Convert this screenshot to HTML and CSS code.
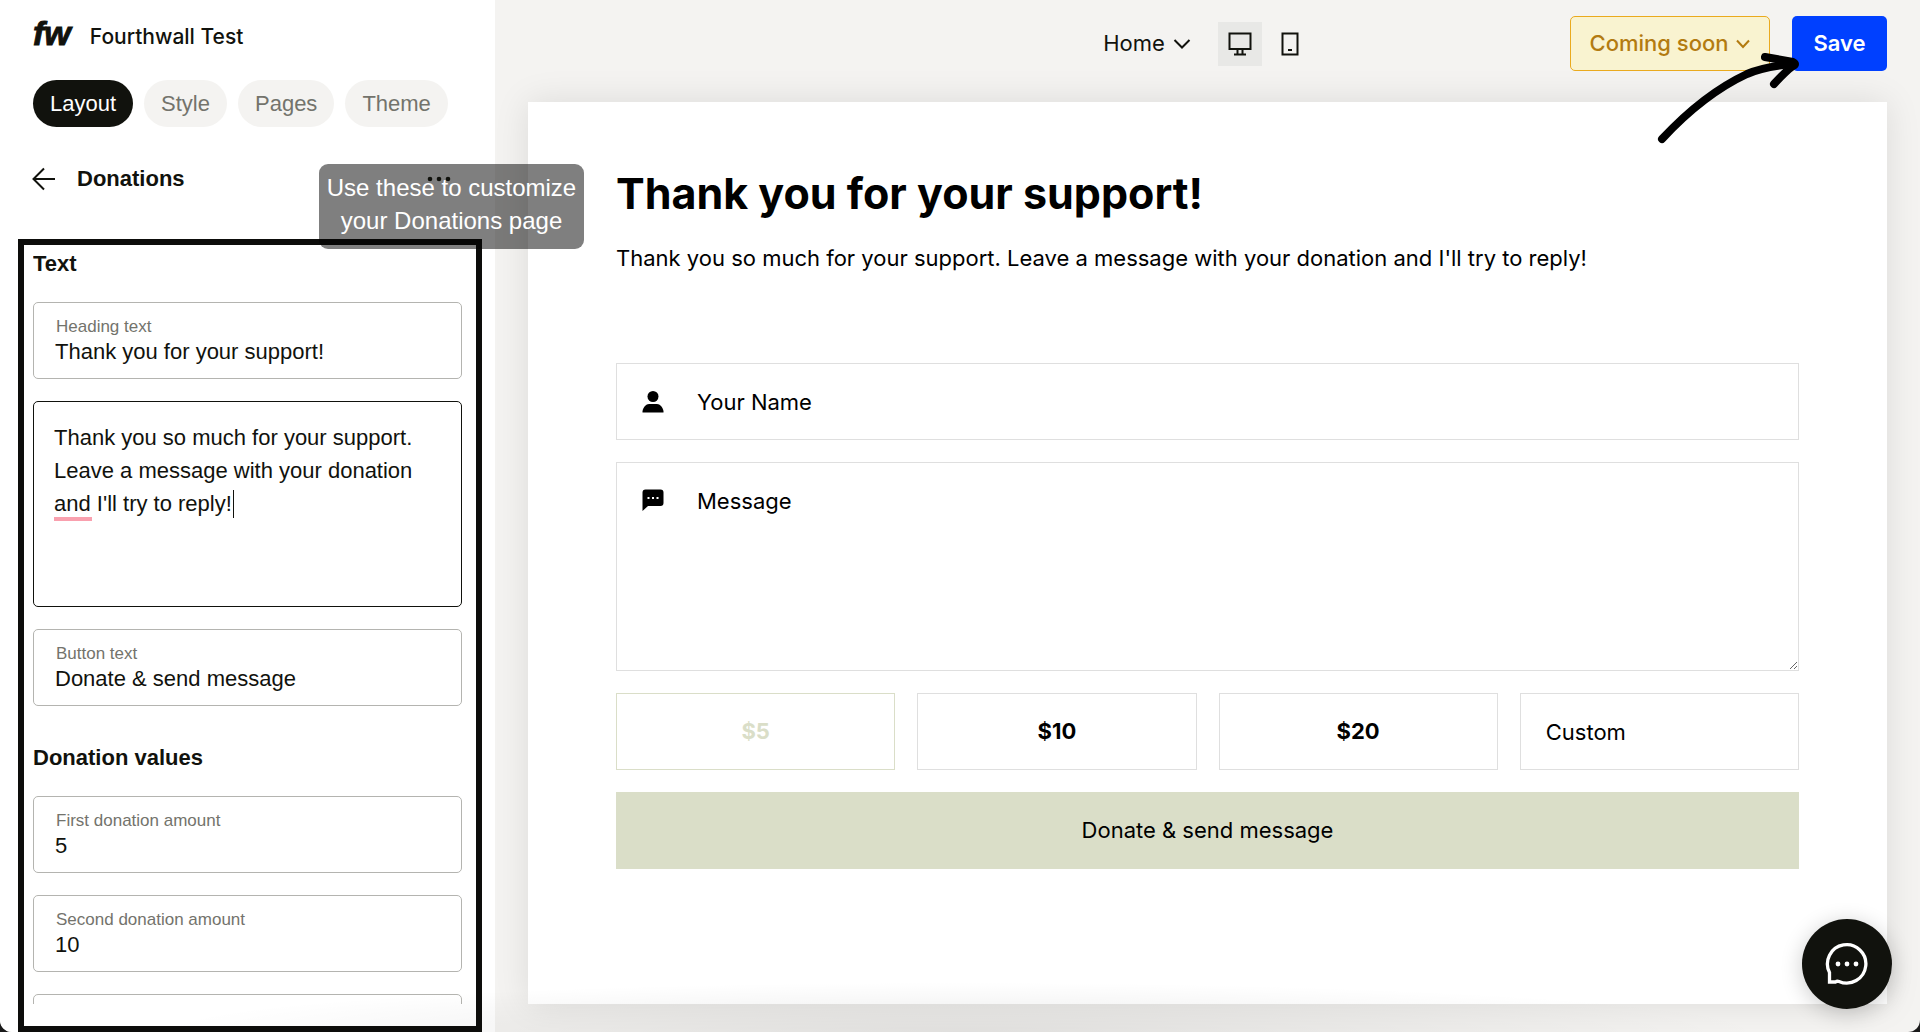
FILE: index.html
```html
<!DOCTYPE html>
<html lang="en">
<head>
<meta charset="utf-8">
<meta name="viewport" content="width=device-width, initial-scale=1">
<title>Fourthwall Test – Donations</title>
<link rel="stylesheet" href="styles.css">
</head>
<body>
<div class="app">
  <aside class="sidebar">
    <header class="brand">
      <span class="brand-logo">fw</span>
      <span class="brand-name">Fourthwall Test</span>
    </header>
    <nav class="tabs" aria-label="Editor sections">
      <button type="button" class="tab tab-active">Layout</button>
      <button type="button" class="tab">Style</button>
      <button type="button" class="tab">Pages</button>
      <button type="button" class="tab">Theme</button>
    </nav>
    <div class="crumb">
      <button type="button" class="icon-button" aria-label="Back">
        <svg width="24" height="24" viewBox="0 0 24 24" fill="none" stroke="currentColor" stroke-width="2"><path d="M23 12H2M12 1.500L1.500 12L12 22.500"/></svg>
      </button>
      <h1 class="crumb-title">Donations</h1>
      <button type="button" class="icon-button more" aria-label="More options">
        <svg width="24" height="24" viewBox="0 0 24 24" fill="currentColor"><circle cx="3" cy="12" r="2.300"/><circle cx="12" cy="12" r="2.300"/><circle cx="21" cy="12" r="2.300"/></svg>
      </button>
      <div class="tip" role="note">Use these to customize your Donations page</div>
    </div>
    <section class="settings">
      <form class="settings-scroll">
        <h2 class="group-title">Text</h2>
        <div class="field">
          <label for="heading-text">Heading text</label>
          <input id="heading-text" type="text" value="Thank you for your support!">
        </div>
        <div class="area">
          <textarea aria-label="Description" spellcheck="false">Thank you so much for your support. Leave a message with your donation and I'll try to reply!</textarea>
          <span class="spell-mark"></span>
          <span class="caret"></span>
        </div>
        <div class="field">
          <label for="button-text">Button text</label>
          <input id="button-text" type="text" value="Donate &amp; send message">
        </div>
        <h2 class="group-title group-title-next">Donation values</h2>
        <div class="field">
          <label for="first-amount">First donation amount</label>
          <input id="first-amount" type="text" value="5">
        </div>
        <div class="field">
          <label for="second-amount">Second donation amount</label>
          <input id="second-amount" type="text" value="10">
        </div>
        <div class="field">
          <input type="text" aria-label="Third donation amount">
        </div>
      </form>
    </section>
  </aside>

  <main class="workspace">
    <div class="toolbar">
      <div class="view-controls">
        <button type="button" class="page-picker">Home
          <svg width="18" height="12" viewBox="0 0 18 12" fill="none" stroke="currentColor" stroke-width="2"><path d="M1.500 2L9 9.500L16.500 2"/></svg>
        </button>
        <button type="button" class="device device-active" aria-label="Desktop preview">
          <svg width="24" height="24" viewBox="0 0 24 24" fill="none" stroke="currentColor" stroke-width="2"><path d="M1.500 1.500H22.500V17H1.500ZM9.500 17V22M14.500 17V22M6 22.500H18"/></svg>
        </button>
        <button type="button" class="device" aria-label="Mobile preview">
          <svg width="24" height="24" viewBox="0 0 24 24" fill="none" stroke="currentColor" stroke-width="2"><path d="M4.500 1.500H19.500V22.500H4.500ZM10 18H14"/></svg>
        </button>
      </div>
      <div class="actions">
        <button type="button" class="status">Coming soon
          <svg width="14" height="10" viewBox="0 0 14 10" fill="none" stroke="currentColor" stroke-width="2"><path d="M1 1.500L7 8L13 1.500"/></svg>
        </button>
        <button type="button" class="save">Save</button>
        <svg class="pointer" width="146" height="100" viewBox="0 0 146 100" fill="none" stroke="#000" stroke-width="8" stroke-linecap="round" stroke-linejoin="round"><path d="M7 92C34 63 62 41 92 27Q108 20 137 17"/><path d="M110 10L138 15Q142 17 138 19Q132 23 119 37"/></svg>
      </div>
    </div>

    <article class="canvas">
      <h2 class="page-heading">Thank you for your support!</h2>
      <p class="page-text">Thank you so much for your support. Leave a message with your donation and I'll try to reply!</p>
      <form class="donate">
        <label class="box">
          <svg width="22" height="22" viewBox="0 0 22 22"><circle cx="11" cy="5.500" r="5.500"/><path d="M0.500 21.500V20C1.500 16 4 13 7 13H15C18 13 20.500 16 21.500 20V21.500Z"/></svg>
          <input type="text" placeholder="Your Name" aria-label="Your Name">
        </label>
        <label class="box box-message">
          <svg width="22" height="22" viewBox="0 0 22 22"><path d="M3.500 0.500H18.500Q21.500 0.500 21.500 3.500V14Q21.500 17 18.500 17H6L0.500 22V3.500Q0.500 0.500 3.500 0.500Z"/><path fill="#fff" d="M5.500 8h2v2h-2zM10 8h2v2h-2zM14.500 8h2v2h-2z"/></svg>
          <textarea placeholder="Message" aria-label="Message"></textarea>
        </label>
        <div class="amounts">
          <button type="button" class="amount amount-active">$5</button>
          <button type="button" class="amount">$10</button>
          <button type="button" class="amount">$20</button>
          <input type="text" class="amount-custom" placeholder="Custom" aria-label="Custom amount">
        </div>
        <button type="button" class="submit">Donate &amp; send message</button>
      </form>
    </article>
  </main>

  <div class="dock-shade"></div>
  <button type="button" class="chat" aria-label="Open chat">
    <svg width="44" height="44" viewBox="0 0 44 44" fill="none" stroke="#fff" stroke-width="3.300"><path d="M4.500 40V30.500A19.200 19.200 0 1 1 14 39.500Q12 38.800 10.500 40Z"/><g fill="#fff" stroke="none"><circle cx="13" cy="22" r="2.400"/><circle cx="22" cy="22" r="2.400"/><circle cx="31" cy="22" r="2.400"/></g></svg>
  </button>
</div>
</body>
</html>
```

FILE: styles.css
```css
* {
  box-sizing: border-box;
}

body {
  margin: 0;
  background: #1a1a1a;
  color: #11120d;
  font: 22px/33px "Liberation Sans", Arial, sans-serif;
}

button,
input,
textarea {
  font: inherit;
  color: inherit;
  margin: 0;
  padding: 0;
  border: 0;
  background: none;
}

h1,
h2,
p {
  margin: 0;
}

svg {
  display: block;
  flex: none;
}

.app {
  position: relative;
  display: flex;
  height: 100vh;
  overflow: hidden;
  border-radius: 0 0 12px 12px;
  background: #f4f3f1;
}

/* Sidebar */

.sidebar {
  flex: none;
  display: flex;
  flex-direction: column;
  width: 495px;
  background: #fff;
}

.brand {
  display: flex;
  align-items: center;
  gap: 19px;
  padding: 20px 33px 27px;
}

.brand-logo {
  font-size: 34px;
  font-style: italic;
  font-weight: 700;
  line-height: 27px;
  padding-bottom: 6px;
  -webkit-text-stroke: 1px currentColor;
}

.brand-name {
  font-family: "Inter", sans-serif;
  font-size: 21px;
  font-weight: 500;
}

.tabs {
  display: flex;
  gap: 11px;
  padding: 0 33px;
}

.tab {
  height: 47px;
  padding: 0 17px;
  border-radius: 24px;
  background: #f4f3f1;
  color: #73736c;
}

.tab-active {
  background: #11120d;
  color: #fff;
}

.crumb {
  position: relative;
  display: flex;
  align-items: center;
  gap: 21px;
  padding: 35px 44px 44px 32px;
}

.crumb-title,
.group-title {
  font-size: 22px;
  font-weight: 700;
}

.more {
  position: relative;
  z-index: 2;
  margin-left: auto;
}

.tip {
  position: absolute;
  z-index: 1;
  top: 37px;
  left: 319px;
  width: 265px;
  padding: 7px 0 12px;
  border-radius: 9px;
  background: rgba(0, 0, 0, 0.5);
  color: #fff;
  font-size: 24px;
  text-align: center;
}

.settings {
  flex: 1;
  min-height: 0;
  display: flex;
  margin: 0 13px 0 18px;
  padding: 0 14px 22px 9px;
  border: 6px solid #0d0d0b;
}

.settings-scroll {
  flex: 1;
  display: flex;
  flex-direction: column;
  gap: 22px;
  overflow: hidden;
}

.group-title {
  flex: none;
  padding-top: 2px;
}

.group-title-next {
  padding-top: 13px;
}

.field {
  flex: none;
  display: flex;
  flex-direction: column;
  height: 77px;
  padding: 12px 21px;
  border: 1px solid #b4b4b0;
  border-radius: 5px;
}

.field label {
  padding-left: 1px;
  color: #73736c;
  font-size: 17px;
  line-height: 23px;
}

.field input {
  width: 100%;
  height: 26px;
}

.area {
  position: relative;
  flex: none;
}

.area textarea {
  display: block;
  width: 100%;
  height: 206px;
  padding: 19px 20px;
  border: 1px solid #11120d;
  border-radius: 5px;
  resize: none;
}

.spell-mark {
  position: absolute;
  top: 116px;
  left: 21px;
  width: 38px;
  height: 4px;
  background: #f9a0ae;
}

.caret {
  position: absolute;
  top: 89px;
  left: 200px;
  width: 1px;
  height: 28px;
  background: #11120d;
}

/* Workspace */

.workspace {
  flex: 1;
  min-width: 0;
  display: flex;
  flex-direction: column;
  padding: 0 33px 28px;
}

.toolbar {
  display: grid;
  grid-template-columns: 1fr auto 1fr;
  align-items: center;
  padding: 16px 0 31px;
  font-family: "Inter", sans-serif;
}

.view-controls {
  grid-column: 2;
  display: flex;
  align-items: center;
  gap: 6px;
}

.page-picker {
  display: flex;
  align-items: center;
  gap: 8px;
  margin-right: 21px;
}

.device {
  display: grid;
  place-items: center;
  width: 44px;
  height: 44px;
}

.device-active {
  background: #e8e8e6;
}

.actions {
  position: relative;
  display: flex;
  justify-content: flex-end;
  gap: 22px;
}

.status {
  display: flex;
  align-items: center;
  justify-content: center;
  gap: 8px;
  width: 200px;
  height: 55px;
  border: 1px solid #eaaa1e;
  border-radius: 5px;
  background: #f9f3d0;
  color: #b37b10;
  font-weight: 500;
}

.save {
  width: 95px;
  height: 55px;
  border-radius: 5px;
  background: #0040ff;
  color: #fff;
  font-weight: 600;
}

.pointer {
  position: absolute;
  top: 31px;
  right: 86px;
  z-index: 2;
}

.canvas {
  flex: 1;
  padding: 64px 88px;
  background: #fff;
  box-shadow: 0 0 33px rgba(0, 0, 0, 0.1);
  color: #000;
  font-family: "Inter", sans-serif;
}

.page-heading {
  font-size: 43px;
  line-height: 55px;
}

.page-text {
  padding: 21px 0 88px;
}

.donate {
  display: flex;
  flex-direction: column;
  gap: 22px;
}

.box {
  display: flex;
  align-items: center;
  gap: 33px;
  height: 77px;
  padding-left: 25px;
  border: 1px solid #dfdfdf;
}

.box input,
.box textarea {
  flex: 1;
  height: 100%;
  outline: 0;
}

.box-message {
  align-items: flex-start;
  height: 209px;
}

.box-message svg {
  margin-top: 26px;
}

.box-message textarea {
  padding-top: 22px;
  resize: vertical;
}

::placeholder {
  color: #000;
  opacity: 1;
}

.amounts {
  display: grid;
  grid-template-columns: repeat(4, minmax(0, 1fr));
  gap: 22px;
}

.amount,
.amount-custom {
  height: 77px;
  border: 1px solid #dfdfdf;
}

.amount {
  font-weight: 700;
}

.amount-active {
  border-color: #dadec8;
  color: #dadec8;
}

.amount-custom {
  width: 100%;
  padding: 0 25px;
}

.submit {
  height: 77px;
  background: #dadec8;
}

/* Floating items */

.dock-shade {
  position: absolute;
  right: 0;
  bottom: 0;
  left: 0;
  height: 50px;
  background: radial-gradient(ellipse 42% 100% at 50% 100%, rgba(0, 0, 0, 0.08), rgba(0, 0, 0, 0));
  pointer-events: none;
}

.chat {
  position: absolute;
  right: 28px;
  bottom: 23px;
  display: grid;
  place-items: center;
  width: 90px;
  height: 90px;
  border-radius: 50%;
  background: #11120d;
  box-shadow: 0 4px 22px rgba(0, 0, 0, 0.2);
}
```
